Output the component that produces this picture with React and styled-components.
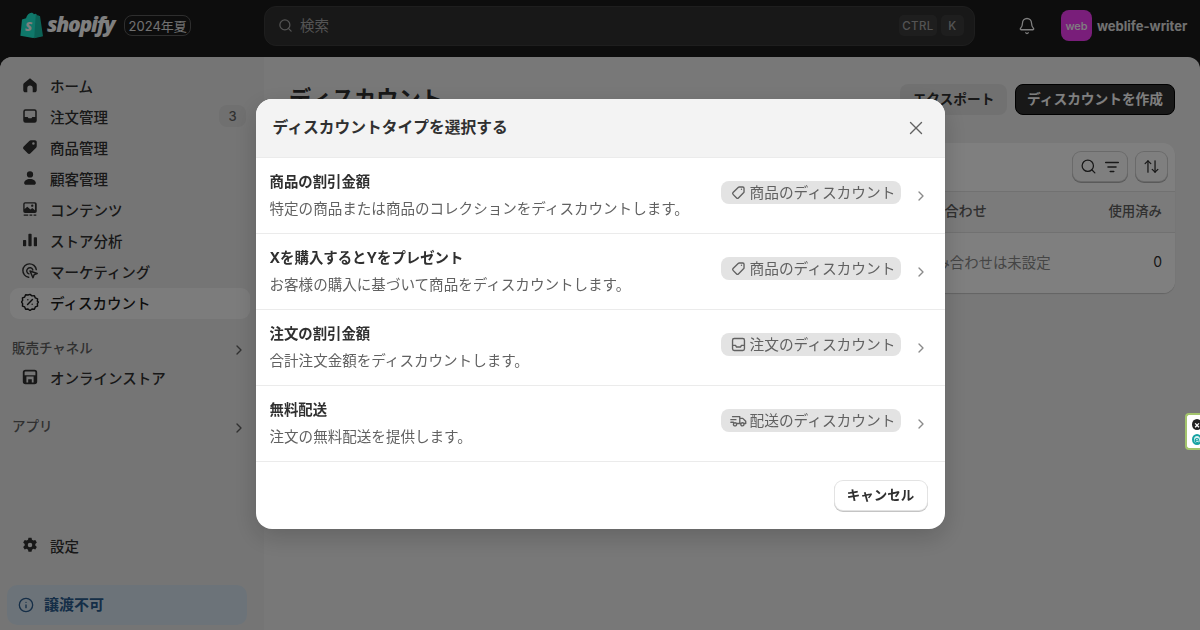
import React from 'react';
import styled, { createGlobalStyle } from 'styled-components';
import { Search, Bell, X, ChevronRight, Info, ArrowUpDown } from 'lucide-react';

const FONT = '"Inter", "Noto Sans CJK JP", "Noto Sans", sans-serif';

const GlobalStyle = createGlobalStyle`
  html, body { margin: 0; padding: 0; height: 630px; overflow: hidden; background: #1a1a1a; }
  body { font-family: ${FONT}; color: #303030; }
  * { box-sizing: border-box; }
`;

const Page = styled.div`
  width: 1200px;
  height: 630px;
  display: flex;
  flex-direction: column;
  background: #1a1a1a;
`;

const TopBar = styled.header`
  height: 57px;
  flex: none;
  padding-bottom: 6px;
  display: flex;
  align-items: center;
`;

const LogoArea = styled.div`
  width: 264px;
  flex: none;
  display: flex;
  align-items: center;
  padding-left: 19px;
`;

const Wordmark = styled.span`
  font-family: "Open Sans", sans-serif;
  font-style: italic;
  font-weight: 800;
  font-size: 21px;
  letter-spacing: -1.25px;
  color: #fff;
  margin: -3px 0 0 3px;
`;

const EditionTag = styled.span`
  margin-left: 10px;
  height: 21px;
  width: 67px;
  padding-bottom: 1px;
  display: flex;
  align-items: center;
  justify-content: center;
  border: 1px solid #5c5c5c;
  border-radius: 8px;
  font-size: 13px;
  color: #e3e3e3;
`;

const SearchBox = styled.div`
  width: 711px;
  height: 40px;
  display: flex;
  align-items: center;
  gap: 4px;
  padding: 0 10px 0 13px;
  background: #303030;
  border: 1px solid #3c3c3c;
  border-radius: 12px;
  color: #a8a8a8;
  font-size: 14.5px;
`;

const SearchLabel = styled.span`
  flex: 1;
  margin-left: 3px;
  padding-bottom: 2px;
`;

const Key = styled.kbd`
  height: 21px;
  width: ${p => p.$width}px;
  display: flex;
  align-items: center;
  justify-content: center;
  background: #3d3d3d;
  border-radius: 5px;
  font-family: ${FONT};
  font-size: 11.5px;
  font-weight: 500;
  letter-spacing: 0.4px;
  color: #a8a8a8;
`;

const BellButton = styled.div`
  margin-left: 43px;
  width: 18px;
  display: flex;
  color: #fff;
`;

const Avatar = styled.div`
  margin-left: 25px;
  width: 31px;
  height: 31px;
  display: flex;
  align-items: center;
  justify-content: center;
  border-radius: 8px;
  background: #f23df5;
  color: #fff;
  font-size: 11px;
  font-weight: 500;
`;

const ShopName = styled.span`
  margin-left: 5px;
  font-size: 13px;
  font-weight: 700;
  color: #e3e3e3;
`;

const Shell = styled.div`
  flex: 1;
  min-height: 0;
  display: flex;
  border-radius: 12px 12px 0 0;
  overflow: hidden;
  background: #f1f1f1;
`;

const Sidebar = styled.nav`
  width: 264px;
  flex: none;
  display: flex;
  flex-direction: column;
  padding: 14px 0 5px;
  background: #ebebeb;
`;

const NavItem = styled.div`
  height: 31px;
  flex: none;
  margin: 0 14px 0 10px;
  padding: 0 4px 3px 11px;
  display: flex;
  align-items: center;
  gap: 11px;
  border-radius: 9px;
  font-size: 14.5px;
  font-weight: 500;
  background: ${p => (p.$active ? '#f9f9f9' : 'transparent')};
  color: ${p => (p.$active ? '#1a1a1a' : '#303030')};
  & > svg { flex: none; }
`;

const NavLabel = styled.span`
  flex: 1;
`;

const CountBadge = styled.span`
  width: 27px;
  height: 22px;
  display: flex;
  align-items: center;
  justify-content: center;
  border-radius: 8px;
  background: #e0e0e0;
  font-size: 13px;
  font-weight: 500;
  color: #616161;
`;

const SectionHead = styled.div`
  height: 30px;
  flex: none;
  margin-top: ${p => p.$gap}px;
  padding: 0 17px 2px 12px;
  display: flex;
  align-items: center;
  justify-content: space-between;
  font-size: 13.5px;
  font-weight: 500;
  color: #616161;
  & > svg { margin-top: 5px; }
`;

const BottomGroup = styled.div`
  margin-top: auto;
  display: flex;
  flex-direction: column;
  gap: 23px;
`;

const TransferNote = styled.div`
  height: 40px;
  margin: 0 17px 0 7px;
  padding: 0 11px 0 11px;
  display: flex;
  align-items: center;
  gap: 10px;
  border-radius: 10px;
  background: #d9e7f2;
  color: #2a5c8f;
  font-size: 15px;
  font-weight: 700;
`;

const NoteLabel = styled.span`
  padding-bottom: 3px;
`;

const Main = styled.main`
  flex: 1;
  padding: 27px 25px 0 26px;
`;

const MainHead = styled.div`
  height: 31px;
  display: flex;
  align-items: center;
  gap: 8px;
  margin-bottom: 28px;
`;

const PageTitle = styled.h1`
  flex: 1;
  margin: -5px 0 0 -1px;
  font-size: 22.2px;
  font-weight: 700;
  color: #303030;
`;

const HeadButton = styled.button`
  height: 31px;
  width: ${p => p.$width}px;
  padding: 0 0 3px;
  border-radius: 8px;
  font-family: ${FONT};
  font-size: 13.7px;
  font-weight: 600;
  border: ${p => (p.$primary ? '1px solid #000' : '0')};
  background: ${p => (p.$primary ? '#303030' : '#e3e3e3')};
  color: ${p => (p.$primary ? '#fff' : '#303030')};
`;

const Card = styled.section`
  height: 150px;
  background: #fff;
  border-radius: 12px;
  box-shadow: 0 1px 1px rgba(0, 0, 0, 0.18);
  overflow: hidden;
`;

const CardTools = styled.div`
  height: 48px;
  padding: 9px 8px 0 0;
  display: flex;
  justify-content: flex-end;
  gap: 9px;
`;

const ToolButton = styled.div`
  height: 29px;
  width: ${p => p.$width}px;
  display: flex;
  align-items: center;
  justify-content: center;
  gap: 6px;
  border-radius: 8px;
  background: #fff;
  box-shadow: 0 0 0 1px #d4d4d4, 0 1px 0 1px #b5b5b5;
  color: #303030;
`;

const TableRow = styled.div`
  display: grid;
  grid-template-columns: 613px 146px 100px;
  align-items: center;
  height: ${p => p.$height}px;
  padding: 0 13px ${p => (p.$head ? 5 : 3)}px;
  font-size: ${p => (p.$head ? '14.2px' : '14.4px')};
  border-top: 1px solid #e3e3e3;
  background: ${p => (p.$head ? '#f7f7f7' : '#fff')};
  font-weight: ${p => (p.$head ? 500 : 400)};
  color: ${p => (p.$head ? '#616161' : '#303030')};
`;

const RightCell = styled.span`
  text-align: right;
  font-size: ${p => (p.$num ? '14px' : '13.4px')};
`;

const MutedCell = styled.span`
  margin-left: 5px;
  color: #8a8a8a;
`;

const Overlay = styled.div`
  position: fixed;
  inset: 0;
  padding-bottom: 2px;
  display: flex;
  align-items: center;
  justify-content: center;
  background: rgba(0, 0, 0, 0.5);
`;

const Modal = styled.div`
  width: 689px;
  height: 430px;
  display: flex;
  flex-direction: column;
  background: #fff;
  border-radius: 16px;
  overflow: hidden;
  box-shadow: 0 8px 24px rgba(0, 0, 0, 0.18);
`;

const ModalHead = styled.div`
  height: 59px;
  flex: none;
  padding: 0 18px 4px 17px;
  display: flex;
  align-items: center;
  justify-content: space-between;
  background: #f3f3f3;
  border-bottom: 1px solid #ebebeb;
`;

const ModalTitle = styled.h2`
  margin: 0;
  font-size: 15.75px;
  font-weight: 700;
  color: #303030;
`;

const CloseIcon = styled(X)`
  margin-top: 4px;
`;

const TypeRow = styled.div`
  height: 76px;
  flex: none;
  padding: 0 16px 2px 14px;
  display: flex;
  align-items: center;
  border-bottom: 1px solid #ebebeb;
  color: #8a8a8a;
  & > svg { margin-top: 2px; }
`;

const TypeText = styled.div`
  flex: 1;
  margin-top: 2px;
  display: flex;
  flex-direction: column;
  gap: 7px;
`;

const TypeName = styled.div`
  font-size: 14.4px;
  line-height: 21px;
  font-weight: 700;
  color: #303030;
`;

const TypeDesc = styled.div`
  font-size: 14.55px;
  line-height: 21px;
  color: #616161;
`;

const TypePill = styled.div`
  width: 180px;
  height: 23px;
  margin: 0 12px 5px 0;
  padding: 0 6px 2px 9px;
  display: flex;
  align-items: center;
  gap: 3px;
  border-radius: 8px;
  background: #e3e3e3;
  color: #616161;
  font-size: 14.7px;
  white-space: nowrap;
  & > svg { flex: none; margin-top: 2px; }
`;

const ModalFoot = styled.div`
  flex: 1;
  padding: 0 18px 0 0;
  display: flex;
  align-items: center;
  justify-content: flex-end;
`;

const CancelButton = styled.button`
  width: 92px;
  height: 29px;
  padding: 0 0 3px;
  border: 0;
  border-radius: 8px;
  background: #fff;
  box-shadow: 0 0 0 1px #e3e3e3, 0 1px 0 1px #c4c4c4;
  font-family: ${FONT};
  font-size: 13.5px;
  font-weight: 600;
  color: #303030;
`;

const SideWidget = styled.div`
  position: fixed;
  top: 413px;
  right: 0;
  width: 15px;
  height: 37px;
  padding: 4px 0 0 5px;
  display: flex;
  flex-direction: column;
  gap: 4px;
  background: #fff;
  border: 2px solid #a3c46c;
  border-right: 0;
  border-radius: 4px 0 0 4px;
`;

const WidgetDot = styled.div`
  width: 10px;
  height: 11px;
  display: flex;
  align-items: center;
  justify-content: center;
  border-radius: 50%;
  font-size: 9px;
  font-weight: 700;
  line-height: 1;
  border: ${p => (p.$ring ? '2px solid #17a3a3' : '0')};
  background: ${p => (p.$ring ? '#d8f3f3' : '#222')};
  color: ${p => (p.$ring ? '#17a3a3' : '#fff')};
`;

function BagLogo() {
  return (
    <svg width="25" height="27" viewBox="0 0 25 27">
      <path fill="#1ef0d4" d="M3 7.5l4-1.2C8 3 10 .8 12.4.8c1.2 0 2 .6 2.4 1.4l2-.4 1.3 1.6 1.9.3 3 20.2-9 2-12.6-2.2z" />
      <path fill="#17c4ad" d="M16.8 1.8l-1.6 24.4 8.8-1.9-3-20.2-2.6-.4z" />
      <text x="9.5" y="19" fontFamily="Open Sans" fontStyle="italic" fontWeight="800" fontSize="13" fill="#fff" textAnchor="middle">S</text>
    </svg>
  );
}

function Glyph({ d, stroke, size = 18 }) {
  return (
    <svg width={size} height={size} viewBox="0 0 20 20">
      <path
        d={d}
        fill={stroke ? 'none' : 'currentColor'}
        fillRule="evenodd"
        stroke={stroke ? 'currentColor' : 'none'}
        strokeWidth={stroke ? 1.6 : 0}
        strokeLinecap="round"
        strokeLinejoin="round"
      />
    </svg>
  );
}

const HOME = 'M10 2.5l6.5 5.2c.6.5 1 1.2 1 2v6c0 1.2-1 2.3-2.3 2.3H13v-4.5a3 3 0 0 0-6 0V18H4.8c-1.300 0-2.300-1.100-2.300-2.300v-6c0-.8.400-1.500 1-2z';
const ORDER = 'M5 2.500h10A2.500 2.500 0 0 1 17.500 5v10a2.500 2.500 0 0 1-2.500 2.500H5A2.500 2.500 0 0 1 2.500 15V5A2.500 2.500 0 0 1 5 2.500zm-.8 8.500h3.200l1 1.500h3.200l1-1.500h3.200V5c0-.5-.4-.9-.8-.9H5c-.4 0-.8.400-.8.900z';
const TAG = 'M11 2.500h4.500c1.100 0 2 .9 2 2V9c0 .7-.3 1.300-.7 1.800l-6.200 6.200c-.9.900-2.300.900-3.200 0L3 12.600c-.9-.9-.9-2.300 0-3.200l6.200-6.200c.5-.4 1.100-.7 1.800-.7zm2.800 2.200a1.400 1.400 0 1 0 0 2.800 1.400 1.400 0 0 0 0-2.800z';
const PERSON = 'M10 2.500a3.500 3.500 0 1 1 0 7 3.500 3.500 0 0 1 0-7zM10 11c3.800 0 6.500 2 6.500 4.500 0 1.200-1 2-2 2h-9c-1 0-2-.8-2-2C3.500 13 6.200 11 10 11z';
const CONTENT = 'M4.500 2.500h11A2 2 0 0 1 17.500 4.500v8a2 2 0 0 1-2 2h-11a2 2 0 0 1-2-2v-8a2 2 0 0 1 2-2zm0 1.500a.5.500 0 0 0-.5.500V10l3-2.500 3.500 3 2-1.500 3 2.500V4.500a.5.500 0 0 0-.5-.5zM12.500 5a1.300 1.300 0 1 0 0 2.600 1.300 1.300 0 0 0 0-2.600zM3 16h5v1.500H3zm6.500 0h3v1.500h-3zm4.500 0h3v1.500h-3z';
const BARS = 'M9 3h2a.8.8 0 0 1 .8.8v12.400a.8.8 0 0 1-.8.8H9a.8.8 0 0 1-.8-.8V3.800A.8.8 0 0 1 9 3zm6 4h2a.8.8 0 0 1 .8.8v8.400a.8.8 0 0 1-.8.8h-2a.8.8 0 0 1-.8-.8V7.800A.8.8 0 0 1 15 7zM3 10h2a.8.8 0 0 1 .8.8v5.400A.8.8 0 0 1 5 17H3a.8.8 0 0 1-.8-.8v-5.400A.8.8 0 0 1 3 10z';
const TARGET = 'M8.500 17a7.500 7.500 0 1 1 8.500-8.500M8.800 13.200a3.500 3.500 0 1 1 4.400-4.400M10 10l8 2.800-3.400 1.300-1.300 3.400z';
const BADGE = 'M10 1.500l2.200 1.700 2.700-.2 1 2.500 2.500 1-.2 2.700L19.500 10l-1.300 1.800.2 2.700-2.500 1-1 2.500-2.700-.2L10 19.500l-2.200-1.700-2.700.2-1-2.500-2.500-1 .2-2.700L.5 10l1.300-1.800-.2-2.700 2.500-1 1-2.500 2.700.2zM12.700 7.300l-5.400 5.400M7.600 7.600h.01M12.400 12.400h.01';
const STORE = 'M5 2h10a3 3 0 0 1 3 3v10a3 3 0 0 1-3 3H5a3 3 0 0 1-3-3V5a3 3 0 0 1 3-3zm0 2a1 1 0 0 0-1 1v3h12V5a1 1 0 0 0-1-1zm1 5.500V16h2v-3.500h4V16h2V9.500z';
const GEAR = 'M8.300 2h3.400l.5 2.200 1.500.9 2.200-.7 1.700 2.900-1.700 1.500v1.800l1.700 1.500-1.700 2.900-2.200-.7-1.500.9-.5 2.300H8.300l-.5-2.300-1.500-.9-2.200.7-1.700-2.900 1.700-1.500V8.800L2.400 7.300l1.700-2.900 2.200.7 1.500-.9zM10 7.500a2.500 2.500 0 1 0 0 5 2.500 2.500 0 0 0 0-5z';
const FILTER = 'M3 5h14M5.500 10h9M8 15h4';
const TAG_LINE = 'M11 3.500h4c.8 0 1.500.7 1.500 1.500v4c0 .5-.2 1-.6 1.400l-6 6c-.6.600-1.500.600-2.100 0l-4.200-4.200c-.6-.6-.6-1.500 0-2.100l6-6c.4-.4.900-.6 1.400-.6zM13.500 6.200h.01';
const ORDER_LINE = 'M5 3h10a2 2 0 0 1 2 2v10a2 2 0 0 1-2 2H5a2 2 0 0 1-2-2V5a2 2 0 0 1 2-2zM3 11h3.500l1.200 2h4.600l1.200-2H17';
const TRUCK_LINE = 'M3 5.500h8.500V13.500H8M11.500 7.500h3.500l3.500 3.500v2.500h-1.500M11.500 13.500h1M1 9h6M1 12h3M7.800 14.500a1.900 1.900 0 1 1-3.800 0 1.900 1.900 0 0 1 3.800 0zM16.500 14.500a1.900 1.900 0 1 1-3.800 0 1.900 1.900 0 0 1 3.800 0z';

const NAV = [
  { label: 'ホーム', icon: HOME },
  { label: '注文管理', icon: ORDER, count: 3 },
  { label: '商品管理', icon: TAG },
  { label: '顧客管理', icon: PERSON },
  { label: 'コンテンツ', icon: CONTENT },
  { label: 'ストア分析', icon: BARS },
  { label: 'マーケティング', icon: TARGET, stroke: true },
  { label: 'ディスカウント', icon: BADGE, stroke: true, active: true },
];

const TYPES = [
  { name: '商品の割引金額', desc: '特定の商品または商品のコレクションをディスカウントします。', tag: '商品のディスカウント', icon: TAG_LINE },
  { name: 'Xを購入するとYをプレゼント', desc: 'お客様の購入に基づいて商品をディスカウントします。', tag: '商品のディスカウント', icon: TAG_LINE },
  { name: '注文の割引金額', desc: '合計注文金額をディスカウントします。', tag: '注文のディスカウント', icon: ORDER_LINE },
  { name: '無料配送', desc: '注文の無料配送を提供します。', tag: '配送のディスカウント', icon: TRUCK_LINE },
];

export default function App() {
  return (
    <Page>
      <GlobalStyle />
      <TopBar>
        <LogoArea>
          <BagLogo />
          <Wordmark>shopify</Wordmark>
          <EditionTag>2024年夏</EditionTag>
        </LogoArea>
        <SearchBox>
          <Search size={15} strokeWidth={2} />
          <SearchLabel>検索</SearchLabel>
          <Key $width={38}>CTRL</Key>
          <Key $width={23}>K</Key>
        </SearchBox>
        <BellButton>
          <Bell size={18} strokeWidth={1.7} />
        </BellButton>
        <Avatar>web</Avatar>
        <ShopName>weblife-writer</ShopName>
      </TopBar>
      <Shell>
        <Sidebar>
          {NAV.map(item => (
            <NavItem key={item.label} $active={item.active}>
              <Glyph d={item.icon} stroke={item.stroke} />
              <NavLabel>{item.label}</NavLabel>
              {item.count && <CountBadge>{item.count}</CountBadge>}
            </NavItem>
          ))}
          <SectionHead $gap={14}>
            販売チャネル
            <ChevronRight size={16} />
          </SectionHead>
          <NavItem>
            <Glyph d={STORE} />
            <NavLabel>オンラインストア</NavLabel>
          </NavItem>
          <SectionHead $gap={17}>
            アプリ
            <ChevronRight size={16} />
          </SectionHead>
          <BottomGroup>
            <NavItem>
              <Glyph d={GEAR} />
              <NavLabel>設定</NavLabel>
            </NavItem>
            <TransferNote>
              <Info size={16} strokeWidth={2} />
              <NoteLabel>譲渡不可</NoteLabel>
            </TransferNote>
          </BottomGroup>
        </Sidebar>
        <Main>
          <MainHead>
            <PageTitle>ディスカウント</PageTitle>
            <HeadButton $width={107}>エクスポート</HeadButton>
            <HeadButton $width={160} $primary>ディスカウントを作成</HeadButton>
          </MainHead>
          <Card>
            <CardTools>
              <ToolButton $width={54}>
                <Search size={17} strokeWidth={1.8} />
                <Glyph d={FILTER} stroke size={18} />
              </ToolButton>
              <ToolButton $width={31}>
                <ArrowUpDown size={17} strokeWidth={1.8} />
              </ToolButton>
            </CardTools>
            <TableRow $head $height={41}>
              <span />
              <span>組み合わせ</span>
              <RightCell>使用済み</RightCell>
            </TableRow>
            <TableRow $height={61}>
              <span />
              <MutedCell>組み合わせは未設定</MutedCell>
              <RightCell $num>0</RightCell>
            </TableRow>
          </Card>
        </Main>
      </Shell>
      <Overlay>
        <Modal>
          <ModalHead>
            <ModalTitle>ディスカウントタイプを選択する</ModalTitle>
            <CloseIcon size={22} color="#616161" strokeWidth={1.5} />
          </ModalHead>
          {TYPES.map(type => (
            <TypeRow key={type.name}>
              <TypeText>
                <TypeName>{type.name}</TypeName>
                <TypeDesc>{type.desc}</TypeDesc>
              </TypeText>
              <TypePill>
                <Glyph d={type.icon} stroke size={17} />
                {type.tag}
              </TypePill>
              <ChevronRight size={16} strokeWidth={2} />
            </TypeRow>
          ))}
          <ModalFoot>
            <CancelButton>キャンセル</CancelButton>
          </ModalFoot>
        </Modal>
      </Overlay>
      <SideWidget>
        <WidgetDot>×</WidgetDot>
        <WidgetDot $ring>e</WidgetDot>
      </SideWidget>
    </Page>
  );
}
